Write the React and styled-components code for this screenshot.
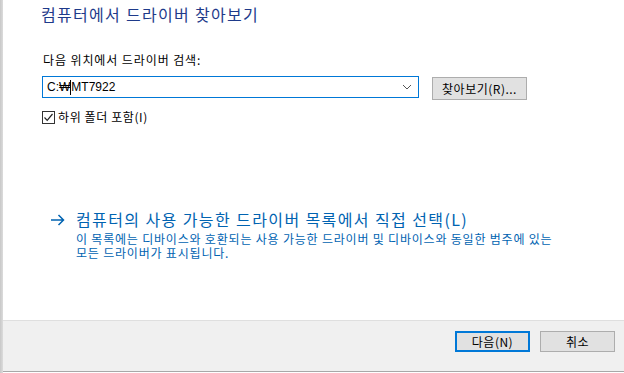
import React from "react";
import styled, { createGlobalStyle } from "styled-components";

const Global = createGlobalStyle`
  html, body { margin: 0; padding: 0; background: #fff; }
  body { font-family: "Noto Sans CJK KR", "Noto Sans", sans-serif; }
  #root { width: 624px; height: 373px; overflow: hidden; }
  svg { display: block; }
`;

const Page = styled.div`
  display: flex;
  width: 624px;
  height: 373px;
`;

const LeftStrip = styled.div`
  width: 3px;
  flex: none;
  background: linear-gradient(to right, #c8c8c8, #dcdcdc);
`;

const Dialog = styled.div`
  flex: 1;
  display: flex;
  flex-direction: column;
  border-bottom: 1px solid #fff;
  box-shadow: inset 0 -1px 0 #a8a8a8;
`;

const Content = styled.div`
  flex: 1;
  background: #fff;
  padding: 4px 0 0 38px;
  display: flex;
  flex-direction: column;
`;

const Title = styled.h1`
  margin: 0;
  font-size: 16px;
  line-height: 20px;
  font-weight: 400;
  letter-spacing: 1.3px;
  color: #1e3a8a;
`;

const Label = styled.div`
  margin-top: 28px;
  font-size: 12px;
  line-height: 16px;
  letter-spacing: 0.9px;
  color: #000;
  padding-left: 2px;
`;

const PathRow = styled.div`
  display: flex;
  align-items: flex-start;
  gap: 13px;
  margin-top: 8px;
  padding-left: 1px;
`;

const Combo = styled.div`
  box-sizing: border-box;
  width: 377px;
  height: 22px;
  border: 1px solid #0078d7;
  display: flex;
  align-items: center;
  padding: 0 6px 0 4px;
  font-family: "Liberation Sans", "Noto Sans CJK KR", sans-serif;
  font-size: 12px;
  color: #000;
`;

const ComboText = styled.span`
  flex: 1;
  display: flex;
  align-items: center;
`;

const Caret = styled.span`
  display: inline-block;
  width: 1px;
  height: 15px;
  background: #000;
`;

const Button = styled.button`
  box-sizing: border-box;
  width: ${(p) => p.$w}px;
  height: ${(p) => p.$h}px;
  margin-top: ${(p) => p.$mt || 0}px;
  background: #e1e1e1;
  border: ${(p) => (p.$default ? "2px solid #0078d7" : "1px solid #adadad")};
  font-family: "Noto Sans CJK KR", sans-serif;
  font-size: 12px;
  line-height: 14px;
  letter-spacing: 0.5px;
  color: #000;
  padding: 0;
  display: flex;
  align-items: center;
  justify-content: center;
`;

const CheckRow = styled.label`
  display: flex;
  align-items: center;
  gap: 3px;
  margin-top: 10px;
  padding-left: 1px;
  font-size: 12px;
  line-height: 14px;
  letter-spacing: 0.6px;
  color: #000;
`;

const Box = styled.span`
  box-sizing: border-box;
  width: 13px;
  height: 13px;
  border: 1px solid #333;
  background: #fff;
  display: flex;
  align-items: center;
  justify-content: center;
`;

const CommandLink = styled.div`
  margin-top: 86px;
  display: flex;
  align-items: flex-start;
  padding-left: 9px;
  gap: 11px;
  color: #0063b1;
`;

const ArrowWrap = styled.div`
  padding-top: 4px;
  flex: none;
`;

const LinkBody = styled.div`
  display: flex;
  flex-direction: column;
`;

const LinkTitle = styled.div`
  font-size: 16px;
  line-height: 19px;
  letter-spacing: 1.4px;
  white-space: nowrap;
`;

const LinkDesc = styled.div`
  font-size: 12px;
  line-height: 14px;
  letter-spacing: 0.8px;
  white-space: nowrap;
  margin-top: 3px;
`;

const Footer = styled.div`
  height: 40px;
  flex: none;
  background: #f0f0f0;
  border-top: 1px solid #dfdfdf;
  display: flex;
  justify-content: flex-end;
  align-items: flex-start;
  gap: 10px;
  padding: 10px 9px 0 0;
  box-sizing: content-box;
  margin-bottom: 1px;
`;

export default function App() {
  return (
    <>
      <Global />
      <Page>
        <LeftStrip />
        <Dialog>
          <Content>
            <Title>컴퓨터에서 드라이버 찾아보기</Title>
            <Label>다음 위치에서 드라이버 검색:</Label>
            <PathRow>
              <Combo>
                <ComboText>
                  C:₩<Caret />MT7922
                </ComboText>
                <svg width="10" height="6" viewBox="0 0 10 6">
                  <path d="M1 1 L5 5 L9 1" fill="none" stroke="#555" strokeWidth="1" />
                </svg>
              </Combo>
              <Button $w={95} $h={23} $mt={1}>찾아보기(R)...</Button>
            </PathRow>
            <CheckRow>
              <Box>
                <svg width="11" height="11" viewBox="0 0 11 11">
                  <path d="M1.5 5.5 L4.2 8.3 L9.5 2" fill="none" stroke="#222" strokeWidth="1.2" />
                </svg>
              </Box>
              하위 폴더 포함(I)
            </CheckRow>
            <CommandLink>
              <ArrowWrap>
                <svg width="15" height="12" viewBox="0 0 15 12">
                  <path d="M1 6 H13.5 M8.5 1 L13.5 6 L8.5 11" fill="none" stroke="#0063b1" strokeWidth="1.5" />
                </svg>
              </ArrowWrap>
              <LinkBody>
                <LinkTitle>컴퓨터의 사용 가능한 드라이버 목록에서 직접 선택(L)</LinkTitle>
                <LinkDesc>
                  이 목록에는 디바이스와 호환되는 사용 가능한 드라이버 및 디바이스와 동일한 범주에 있는
                  <br />
                  모든 드라이버가 표시됩니다.
                </LinkDesc>
              </LinkBody>
            </CommandLink>
          </Content>
          <Footer>
            <Button $w={75} $h={21} $default>다음(N)</Button>
            <Button $w={75} $h={21}>취소</Button>
          </Footer>
        </Dialog>
      </Page>
    </>
  );
}
